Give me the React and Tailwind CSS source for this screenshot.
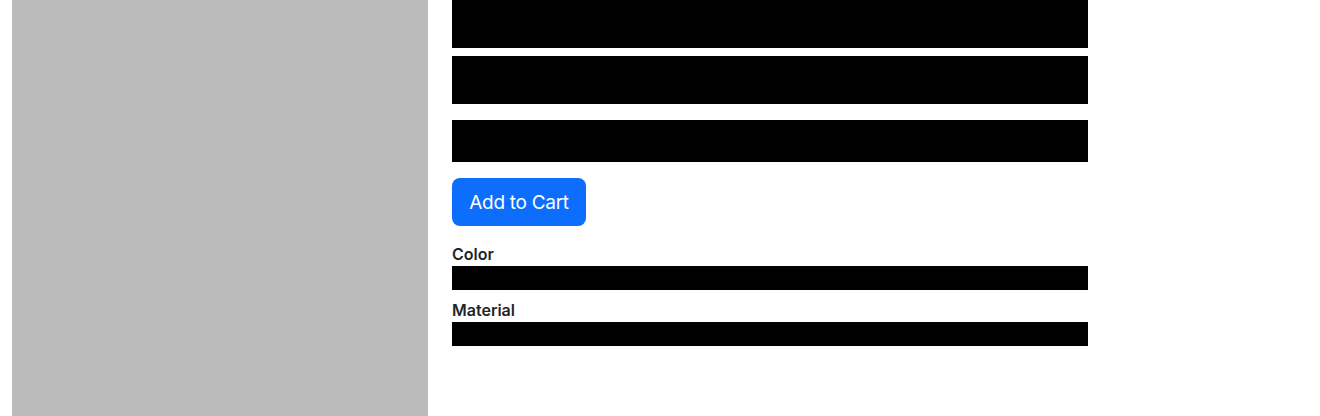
export default function App() {
  return (
    <div className="flex h-[416px] gap-6 overflow-hidden bg-white pl-3 font-['Inter',sans-serif] text-[#212529]">
      {/* Product image placeholder */}
      <div className="h-full w-[416px] flex-shrink-0 bg-[#bababa]" />

      {/* Details */}
      <div className="flex w-[636px] flex-col">
        <div className="h-12 bg-black" />
        <div className="mt-2 h-12 bg-black" />
        <div className="mt-4 h-[42px] bg-black" />

        <div className="mt-4">
          <button className="h-12 w-[134px] rounded-lg bg-[#0d6efd] text-[19px] leading-none tracking-[-0.3px] text-white">
            Add to Cart
          </button>
        </div>

        <div className="mt-4 flex flex-col">
          <label className="text-base font-semibold leading-6">Color</label>
          <div className="h-6 bg-black" />
          <label className="mt-2 text-base font-semibold leading-6">Material</label>
          <div className="h-6 bg-black" />
        </div>
      </div>
    </div>
  );
}
